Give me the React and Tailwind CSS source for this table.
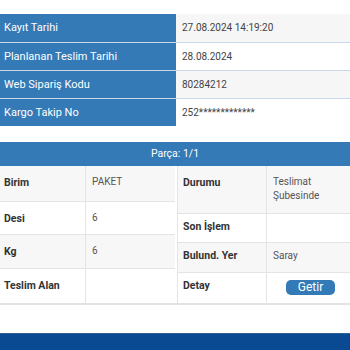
const topRows = [
  ['Kayıt Tarihi', '27.08.2024 14:19:20'],
  ['Planlanan Teslim Tarihi', '28.08.2024'],
  ['Web Sipariş Kodu', '80284212'],
  ['Kargo Takip No', '252*************'],
]

const leftRows = [
  { label: 'Birim', value: 'PAKET', h: 'h-[35px]' },
  { label: 'Desi', value: '6', h: 'h-[33px]' },
  { label: 'Kg', value: '6', h: 'h-[34px]' },
  { label: 'Teslim Alan', value: '', h: 'h-[35px]' },
]

export default function App() {
  return (
    <div className="w-[350px] h-[350px] bg-white flex flex-col overflow-hidden text-[10.5px] leading-[14px]" style={{ fontFamily: 'Roboto, "Liberation Sans", sans-serif' }}>
      {/* Sipariş bilgileri */}
      <div className="mt-[14px] flex flex-col">
        {topRows.map(([label, value], i) => (
          <div key={label} className={`grid grid-cols-[176px_1fr] h-[28px] ${i > 0 ? 'border-t border-[#c9d8e8]' : ''}`}>
            <div className="bg-[#337ab7] text-white text-[11px] flex items-center pl-[4px]">{label}</div>
            <div className={`flex items-center pl-[6px] text-[10px] text-[#444] ${i % 2 === 0 ? 'bg-[#f6f6f6]' : 'bg-white'}`}>{value}</div>
          </div>
        ))}
      </div>

      {/* Parça */}
      <div className="mt-[16px] h-[24px] bg-[#337ab7] text-white flex items-center justify-center">Parça: 1/1</div>

      <div className="grid grid-cols-[175px_173px] gap-[2px] border-b-2 border-[#e2e2e2]">
        <div className="flex flex-col">
          {leftRows.map((r, i) => (
            <div key={r.label} className={`grid grid-cols-[86px_1fr] ${r.h} ${i > 0 ? 'border-t border-[#e4e4e4]' : ''} ${i % 2 === 0 ? 'bg-[#f7f7f7]' : 'bg-white'}`}>
              <div className="pl-[4px] pt-[10px] font-bold text-[#333] border-r border-[#e4e4e4]">{r.label}</div>
              <div className="pl-[6px] pt-[9px] text-[10px] text-[#555]">{r.value}</div>
            </div>
          ))}
        </div>
        <div className="flex flex-col border-l border-[#e4e4e4]">
          <div className="grid grid-cols-[89px_1fr] h-[47px] bg-[#f7f7f7]">
            <div className="pl-[5px] pt-[10px] font-bold text-[#333] border-r border-[#e4e4e4]">Durumu</div>
            <div className="pl-[6px] pt-[9px] text-[10px] text-[#555]">Teslimat<br />Şubesinde</div>
          </div>
          <div className="grid grid-cols-[89px_1fr] h-[29px] border-t border-[#e4e4e4] bg-white">
            <div className="pl-[5px] pt-[6px] font-bold text-[#333] border-r border-[#e4e4e4]">Son İşlem</div>
            <div></div>
          </div>
          <div className="grid grid-cols-[89px_1fr] h-[30px] border-t border-[#e4e4e4] bg-[#f7f7f7]">
            <div className="pl-[5px] pt-[6px] font-bold text-[#333] border-r border-[#e4e4e4]">Bulund. Yer</div>
            <div className="pl-[6px] pt-[6px] text-[10px] text-[#555]">Saray</div>
          </div>
          <div className="grid grid-cols-[89px_1fr] h-[30px] border-t border-[#e4e4e4] bg-white">
            <div className="pl-[5px] pt-[6px] font-bold text-[#333] border-r border-[#e4e4e4]">Detay</div>
            <div className="flex justify-center pt-[7px] pl-[4px]">
              <button className="w-[49px] h-[15px] rounded-[5px] bg-[#337ab7] text-white text-[12px] leading-[15px]">Getir</button>
            </div>
          </div>
        </div>
      </div>

      <div className="flex-1" />
      <div className="h-[17px] bg-[#0a4a92] border-t border-[#2f5f96]" />
    </div>
  )
}
